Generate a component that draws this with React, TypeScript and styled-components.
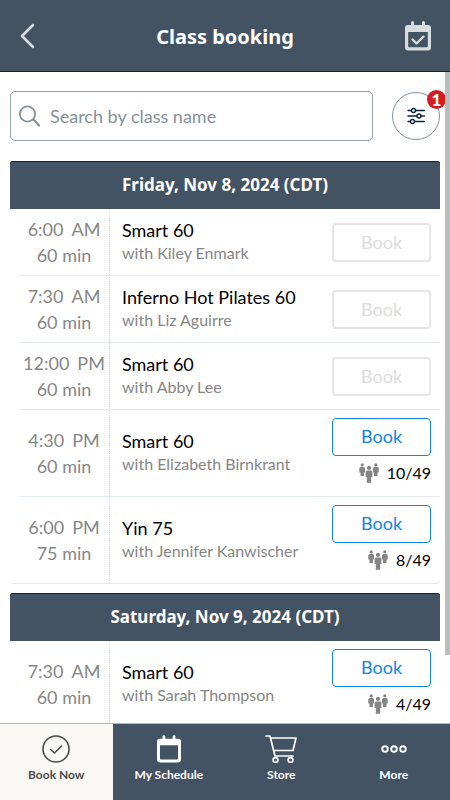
import React from "react";
import styled, { createGlobalStyle } from "styled-components";

const GlobalStyle = createGlobalStyle`
  *, *::before, *::after { box-sizing: border-box; }
  body { margin: 0; background: #fff; font-family: Lato, "Noto Sans", sans-serif; }
  button, input { font: inherit; }
`;

const slate = "#435363";
const navy = "#0a2440";
const blue = "#1286e4";
const hairline = "#e3eaee";

const Screen = styled.div`
  display: flex;
  flex-direction: column;
  height: 100vh;
`;

const Header = styled.header`
  display: grid;
  grid-template-columns: 44px 1fr 44px;
  align-items: center;
  flex: none;
  height: 72px;
  padding: 0 10px;
  background: ${slate};
  border-bottom: 1px solid ${navy};
`;

const Title = styled.h1`
  margin: 0;
  padding-top: 2px;
  text-align: center;
  color: #fff;
  font: 700 20px/28px "Noto Sans", sans-serif;
`;

const HeaderButton = styled.button<{ $end?: boolean }>`
  display: flex;
  align-items: center;
  justify-content: ${(p) => (p.$end ? "flex-end" : "flex-start")};
  height: 44px;
  padding: 0 9px;
  border: 0;
  background: none;
  color: #d9dcde;
`;

const Body = styled.div`
  position: relative;
  flex: 1;
  min-height: 0;
  border-bottom: 1px solid #b4b8bc;
`;

const Scroller = styled.main`
  height: 100%;
  overflow-y: auto;
  scrollbar-width: none;
  padding: 19px 10px;
`;

const ScrollThumb = styled.div`
  position: absolute;
  top: 0;
  right: 0;
  width: 5px;
  height: 89.5%;
  background: #bcbcbc;
`;

const SearchBar = styled.form`
  display: flex;
  align-items: center;
  gap: 19px;
  margin-bottom: 20px;
`;

const SearchField = styled.label`
  display: flex;
  flex: 1;
  align-items: center;
  gap: 8px;
  min-width: 0;
  height: 50px;
  padding: 0 7px;
  border: 1px solid #98a4ac;
  border-radius: 5px;
  color: #84929b;
`;

const SearchInput = styled.input`
  flex: 1;
  min-width: 0;
  padding: 0;
  border: 0;
  outline: 0;
  background: none;
  color: #333;
  font-size: 18px;
  line-height: 24px;
  &::placeholder { color: #84929b; opacity: 1; }
`;

const FilterButton = styled.button`
  position: relative;
  display: flex;
  flex: none;
  align-items: center;
  justify-content: center;
  width: 48px;
  height: 48px;
  padding: 0;
  border: 1px solid #84929b;
  border-radius: 50%;
  background: #fff;
  color: ${navy};
`;

const Badge = styled.span`
  position: absolute;
  top: -3px;
  right: -7px;
  width: 19px;
  height: 19px;
  border-radius: 50%;
  background: #d71920;
  color: #fff;
  font: 900 17px/19px Lato, sans-serif;
  text-align: center;
`;

const Day = styled.section`
  margin-bottom: 9px;
  border-bottom: 1px solid ${hairline};
  border-radius: 4px;
`;

const DayTitle = styled.h2`
  margin: 0;
  padding: 12px;
  border-radius: 3px 3px 0 0;
  background: ${slate};
  box-shadow: inset 0 1px ${navy};
  color: #fff;
  font: 700 17px/24px "Noto Sans", sans-serif;
  text-align: center;
`;

const ClassList = styled.ul`
  margin: 0;
  padding: 0 0 0 9px;
  list-style: none;
`;

const ClassRow = styled.li`
  display: grid;
  grid-template-columns: 91px 1fr 99px;
  align-items: center;
  padding-right: 9px;
  & + & { border-top: 1px solid ${hairline}; }
`;

const TimeCell = styled.div`
  display: flex;
  flex-direction: column;
  align-items: center;
  justify-content: center;
  align-self: stretch;
  border-right: 1px dotted #d5dbde;
  color: #868686;
  font-size: 18px;
  line-height: 26px;
`;

const Clock = styled.time`
  display: flex;
  gap: 8px;
`;

const Info = styled.div`
  padding: 0 0 4px 12px;
  white-space: nowrap;
`;

const ClassName = styled.h3`
  margin: 0;
  color: #000;
  font-size: 18px;
  font-weight: 400;
  line-height: 24px;
`;

const Teacher = styled.p`
  margin: 0;
  color: #868686;
  font-size: 16px;
  line-height: 21px;
`;

const Booking = styled.div<{ $open: boolean }>`
  display: flex;
  flex-direction: column;
  padding: ${(p) => (p.$open ? "8px 0 11px" : "14px 0 13px")};
`;

const BookButton = styled.button`
  height: 38px;
  padding: 0 0 2px;
  border: 1px solid ${blue};
  border-radius: 4px;
  background: #fff;
  color: ${blue};
  font-size: 18px;
  &:disabled { height: 39px; border: 2px solid #e6e6e6; color: #dcdcdc; }
`;

const Spots = styled.div`
  display: flex;
  align-items: center;
  justify-content: flex-end;
  gap: 8px;
  padding-top: 5px;
  color: #000;
  font-size: 16px;
  line-height: 24px;
`;

const Tabs = styled.nav`
  display: grid;
  grid-template-columns: repeat(4, 1fr);
  flex: none;
  height: 76px;
  background: ${slate};
`;

const Tab = styled.a<{ $active?: boolean }>`
  display: flex;
  flex-direction: column;
  align-items: center;
  gap: 4px;
  padding-top: 11px;
  background: ${(p) => (p.$active ? "#f9f8f4" : "transparent")};
  color: ${(p) => (p.$active ? "#4d4d4d" : "#fff")};
  font-size: 12px;
  font-weight: 700;
  line-height: 16px;
  text-decoration: none;
`;

const BackIcon = () => (
  <svg width="16" height="26" viewBox="0 0 16 26" fill="none" stroke="currentColor" strokeWidth="2.6" strokeLinecap="round" strokeLinejoin="round">
    <path d="M14 2 3 13l11 11" />
  </svg>
);

const CalendarIcon = ({ size, checked }: { size: number; checked?: boolean }) => (
  <svg width={size} height={Math.round((size * 30) / 26)} viewBox="0 0 26 30" fill="none" stroke="currentColor">
    <path d="M7.5 1.5v5M18.5 1.5v5" strokeWidth="3" strokeLinecap="round" />
    <path fill="currentColor" stroke="none" fillRule="evenodd" d="M3 4h20a3 3 0 0 1 3 3v19.500a3 3 0 0 1-3 3H3a3 3 0 0 1-3-3V7a3 3 0 0 1 3-3Zm.2 7V25.300a1 1 0 0 0 1 1h17.600a1 1 0 0 0 1-1V11Z" />
    {checked && <path d="m7.500 18.500 4 4L18.500 15.500" strokeWidth="2.400" strokeLinecap="round" strokeLinejoin="round" />}
  </svg>
);

const SearchIcon = () => (
  <svg width="24" height="24" viewBox="0 0 24 24" fill="none" stroke="currentColor" strokeWidth="1.8" strokeLinecap="round">
    <circle cx="9.500" cy="10" r="7.600" />
    <path d="m15.500 15.500 5.500 6" strokeWidth="2.200" />
  </svg>
);

const SlidersIcon = () => (
  <svg width="18" height="18" viewBox="0 0 18 18" fill="none" stroke="currentColor" strokeWidth="1.400" strokeLinecap="round">
    <path d="M1 3.500h16.500M1 9h16.500M1 14.500h16.500" />
    <g fill="#fff">
      <circle cx="6.500" cy="3.500" r="2" />
      <circle cx="12" cy="9" r="2" />
      <circle cx="5.500" cy="14.500" r="2" />
    </g>
  </svg>
);

const PeopleIcon = () => (
  <svg width="20" height="20" viewBox="0 0 20 20" fill="#858585">
    <circle cx="3.200" cy="1.900" r="1.600" />
    <path d="M1.500 4h3.400L6 5v4.500H5V13H1.500V9.500H.3V5Z" />
    <circle cx="16.800" cy="1.900" r="1.600" />
    <path d="M15.100 4h3.400l1.200 1v4.500h-1.200V13H15V9.500h-1V5Z" />
    <circle cx="10" cy="4.900" r="2.100" />
    <path d="M7.800 7.600h4.400l1.200 1.200v5.200h-1.200v5.700H7.800v-5.700H6.600V8.800Z" />
  </svg>
);

const CheckCircleIcon = () => (
  <svg width="28" height="28" viewBox="0 0 28 28" fill="none" stroke="currentColor" strokeWidth="1.600" strokeLinecap="round" strokeLinejoin="round">
    <circle cx="14" cy="14" r="13" />
    <path d="m8.500 14.500 4 3.500 7-7" />
  </svg>
);

const CartIcon = () => (
  <svg width="32" height="28" viewBox="0 0 32 28" fill="none" stroke="currentColor" strokeWidth="1.700" strokeLinecap="round" strokeLinejoin="round">
    <path d="M1 1h4l5 20h18M5.500 3H31l-3 12.500H9" />
    <circle cx="10.500" cy="25" r="2.400" />
    <circle cx="25.500" cy="25" r="2.400" />
  </svg>
);

const MoreIcon = () => (
  <svg width="28" height="28" viewBox="0 0 28 28" fill="none" stroke="currentColor" strokeWidth="1.900">
    <circle cx="5" cy="14" r="2.800" />
    <circle cx="14" cy="14" r="2.800" />
    <circle cx="23" cy="14" r="2.800" />
  </svg>
);

type Session = { time: string; half: string; length: number; name: string; teacher: string; spots?: string };

const days: { title: string; sessions: Session[] }[] = [
  {
    title: "Friday, Nov 8, 2024 (CDT)",
    sessions: [
      { time: "6:00", half: "AM", length: 60, name: "Smart 60", teacher: "Kiley Enmark" },
      { time: "7:30", half: "AM", length: 60, name: "Inferno Hot Pilates 60", teacher: "Liz Aguirre" },
      { time: "12:00", half: "PM", length: 60, name: "Smart 60", teacher: "Abby Lee" },
      { time: "4:30", half: "PM", length: 60, name: "Smart 60", teacher: "Elizabeth Birnkrant", spots: "10/49" },
      { time: "6:00", half: "PM", length: 75, name: "Yin 75", teacher: "Jennifer Kanwischer", spots: "8/49" },
    ],
  },
  {
    title: "Saturday, Nov 9, 2024 (CDT)",
    sessions: [{ time: "7:30", half: "AM", length: 60, name: "Smart 60", teacher: "Sarah Thompson", spots: "4/49" }],
  },
];

const SessionRow = ({ session }: { session: Session }) => (
  <ClassRow>
    <TimeCell>
      <Clock>
        <span>{session.time}</span>
        <span>{session.half}</span>
      </Clock>
      <span>{session.length} min</span>
    </TimeCell>
    <Info>
      <ClassName>{session.name}</ClassName>
      <Teacher>with {session.teacher}</Teacher>
    </Info>
    <Booking $open={!!session.spots}>
      <BookButton type="button" disabled={!session.spots}>Book</BookButton>
      {session.spots && (
        <Spots>
          <PeopleIcon />
          {session.spots}
        </Spots>
      )}
    </Booking>
  </ClassRow>
);

export default function App() {
  return (
    <Screen>
      <GlobalStyle />
      <Header>
        <HeaderButton type="button" aria-label="Back"><BackIcon /></HeaderButton>
        <Title>Class booking</Title>
        <HeaderButton type="button" aria-label="My bookings" $end><CalendarIcon size={26} checked /></HeaderButton>
      </Header>
      <Body>
        <Scroller>
          <SearchBar onSubmit={(e) => e.preventDefault()}>
            <SearchField>
              <SearchIcon />
              <SearchInput type="text" aria-label="Search by class name" placeholder="Search by class name" />
            </SearchField>
            <FilterButton type="button" aria-label="Filters">
              <SlidersIcon />
              <Badge>1</Badge>
            </FilterButton>
          </SearchBar>
          {days.map((day) => (
            <Day key={day.title}>
              <DayTitle>{day.title}</DayTitle>
              <ClassList>
                {day.sessions.map((s) => <SessionRow key={s.time + s.half} session={s} />)}
              </ClassList>
            </Day>
          ))}
        </Scroller>
        <ScrollThumb />
      </Body>
      <Tabs>
        <Tab href="#book" $active><CheckCircleIcon />Book Now</Tab>
        <Tab href="#schedule"><CalendarIcon size={24} />My Schedule</Tab>
        <Tab href="#store"><CartIcon />Store</Tab>
        <Tab href="#more"><MoreIcon />More</Tab>
      </Tabs>
    </Screen>
  );
}
